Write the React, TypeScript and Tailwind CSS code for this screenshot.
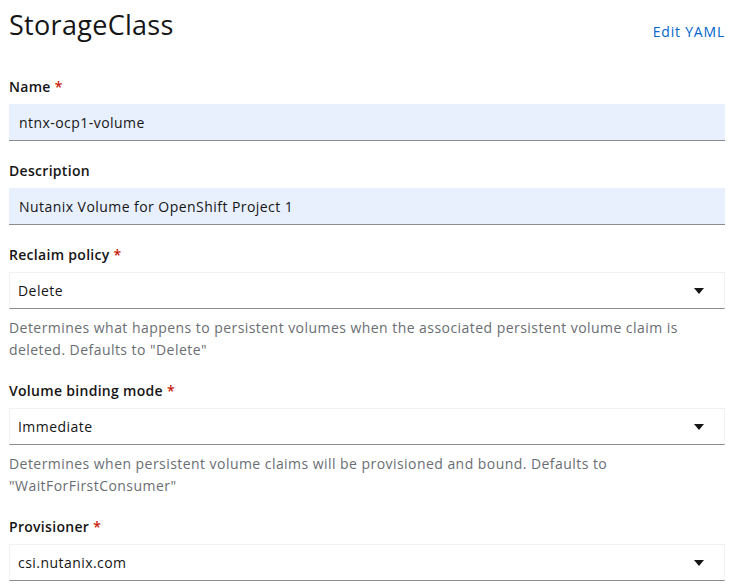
import React from "react";

const font = { fontFamily: '"Open Sans", "Noto Sans", sans-serif' };

const Label = ({ text, required }: { text: string; required?: boolean }) => (
    <div className="mb-[7px] text-[14px] leading-[21px] font-semibold tracking-[0.3px] text-[#151515]">
        {text}
        {required && <span className="ml-1 text-[#c9190b]">*</span>}
    </div>
);

const TextInput = ({ value }: { value: string }) => (
    <div className="h-[37px] bg-[#e8f0fe] border-b border-[#8a8d90] pl-[10px] flex items-center text-[14px] tracking-[0.45px] text-[#151515]">
        {value}
    </div>
);

const SelectBox = ({ value }: { value: string }) => (
    <div className="h-[37px] bg-white border border-[#f0f0f0] border-b-[#8a8d90] pl-[8px] pr-[20px] flex items-center justify-between text-[14px] tracking-[0.45px] text-[#151515]">
        <span>{value}</span>
        <svg width="10" height="6" viewBox="0 0 10 6">
            <path d="M0 0 L10 0 L5 6 Z" fill="#151515" />
        </svg>
    </div>
);

const Helper = ({ children }: { children: React.ReactNode }) => (
    <p className="mt-[8px] text-[14px] leading-[22px] tracking-[0.45px] text-[#6a6e73]">{children}</p>
);

export default function App() {
    return (
        <div style={font} className="w-[735px] h-[588px] bg-white overflow-hidden pl-[9px] pr-[10px]">
            <div className="flex items-end justify-between pt-[6px] mb-[32px]">
                <h1 className="text-[27px] leading-[38px] tracking-[0.3px] text-[#151515]">StorageClass</h1>
                <a className="text-[14px] tracking-[0.8px] text-[#0066cc] mb-[2px]">Edit YAML</a>
            </div>

            <div className="flex flex-col gap-[19px]">
                <div>
                    <Label text="Name" required />
                    <TextInput value="ntnx-ocp1-volume" />
                </div>
                <div>
                    <Label text="Description" />
                    <TextInput value="Nutanix Volume for OpenShift Project 1" />
                </div>
                <div>
                    <Label text="Reclaim policy" required />
                    <SelectBox value="Delete" />
                    <Helper>
                        Determines what happens to persistent volumes when the associated persistent volume claim is deleted. Defaults to "Delete"
                    </Helper>
                </div>
                <div>
                    <Label text="Volume binding mode" required />
                    <SelectBox value="Immediate" />
                    <Helper>
                        Determines when persistent volume claims will be provisioned and bound. Defaults to "WaitForFirstConsumer"
                    </Helper>
                </div>
                <div>
                    <Label text="Provisioner" required />
                    <SelectBox value="csi.nutanix.com" />
                </div>
            </div>
        </div>
    );
}
